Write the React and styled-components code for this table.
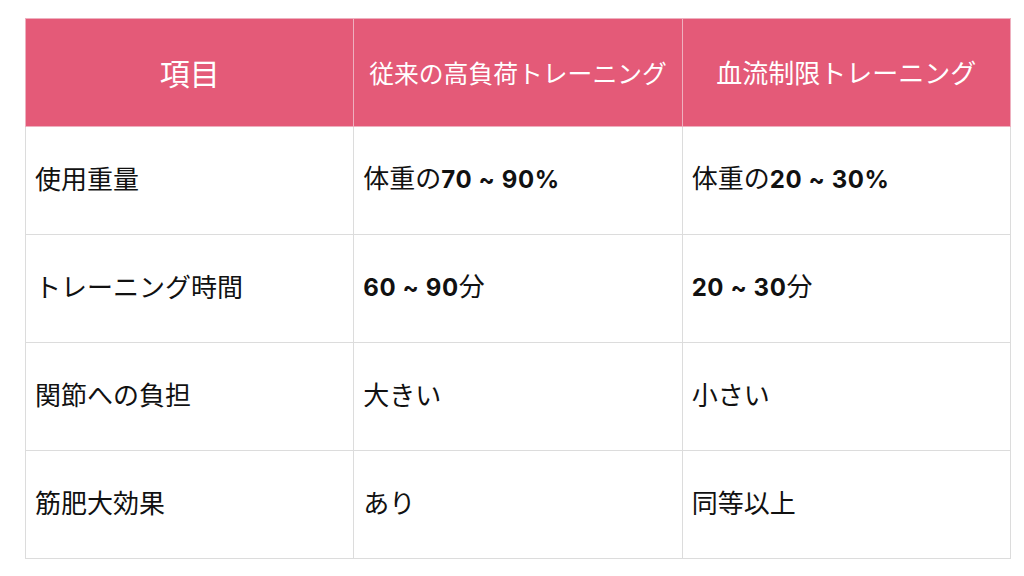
import styled, { createGlobalStyle } from "styled-components"

const GlobalStyle = createGlobalStyle`
  html, body {
    margin: 0;
    padding: 0;
    background: #fff;
  }
  body {
    font-family: "Noto Sans CJK JP", sans-serif;
    color: #111;
  }
`

const rows = [
  { label: "使用重量", a: ["体重の", <b key="b">70 ~ 90%</b>], b: ["体重の", <b key="b">20 ~ 30%</b>] },
  { label: "トレーニング時間", a: [<b key="b">60 ~ 90</b>, "分"], b: [<b key="b">20 ~ 30</b>, "分"] },
  { label: "関節への負担", a: ["大きい"], b: ["小さい"] },
  { label: "筋肥大効果", a: ["あり"], b: ["同等以上"] },
]

const App = () => {
  return (
    <Page>
      <GlobalStyle />
      <Table>
        <thead>
          <tr>
            <Head $size={30}>項目</Head>
            <Head $size={24.8}>従来の高負荷トレーニング</Head>
            <Head $size={26}>血流制限トレーニング</Head>
          </tr>
        </thead>
        <tbody>
          {rows.map((r) => (
            <tr key={r.label}>
              <Cell>{r.label}</Cell>
              <Cell>{r.a}</Cell>
              <Cell>{r.b}</Cell>
            </tr>
          ))}
        </tbody>
      </Table>
    </Page>
  )
}

export default App

const Page = styled.div`
  padding: 18px 13px 0 25px;
`

const Table = styled.table`
  width: 986px;
  border-collapse: collapse;
  table-layout: fixed;
`

const Head = styled.th`
  height: 108px;
  padding: 0 0 2px;
  background: #e45a78;
  color: #fff;
  font-family: "Noto Sans CJK JP", sans-serif;
  font-weight: 400;
  font-size: ${(p) => p.$size}px;
  text-align: center;
  white-space: nowrap;
  border: 1px solid #eeb0bf;
  box-sizing: border-box;
`

const Cell = styled.td`
  height: 108px;
  padding: 0 0 6px 9px;
  font-size: 26px;
  line-height: 1;
  vertical-align: middle;
  border: 1px solid #dcdcdc;
  box-sizing: border-box;

  b {
    font-weight: 700;
    font-size: 24px;
    letter-spacing: 0.6px;
    font-family: Inter, sans-serif;
  }
`
